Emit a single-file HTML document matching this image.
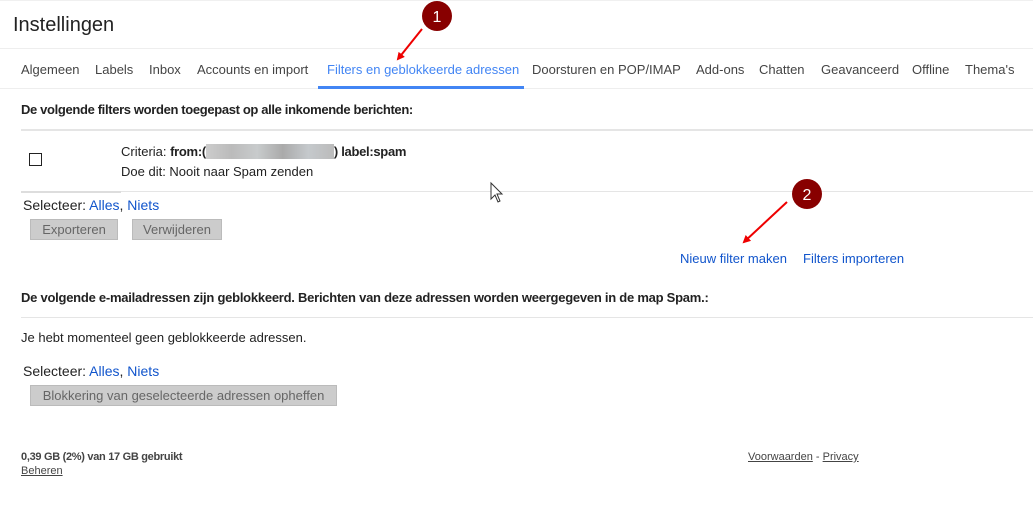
<!DOCTYPE html>
<html><head><meta charset="utf-8"><style>
body{margin:0;width:1033px;height:521px;background:#fff;position:relative;overflow:hidden;font-family:"Liberation Sans",Arial,sans-serif;color:#222;}
.a{position:absolute;white-space:nowrap;font-size:13px;line-height:16px;}
.t{color:#444;}
.b{font-weight:bold;letter-spacing:-0.35px;}
.l{color:#15c;}
.hr{position:absolute;height:1px;background:#e5e5e5;}
.btn{position:absolute;background:#ccc;border:1px solid #bbb;color:#666;font-size:13px;text-align:center;line-height:19px;box-sizing:border-box;height:21px;}
.u{text-decoration:underline;color:#444;font-size:11px;}
</style></head><body>
<div class="hr" style="left:0;top:0;width:1033px;background:#f0f0f0"></div>
<div class="a" style="left:13px;top:13px;font-size:20px;line-height:24px;color:#222">Instellingen</div>
<div class="hr" style="left:0;top:48px;width:1033px;background:#eee"></div>
<div class="a t" style="left:21px;top:62px">Algemeen</div>
<div class="a t" style="left:95px;top:62px">Labels</div>
<div class="a t" style="left:149px;top:62px">Inbox</div>
<div class="a t" style="left:197px;top:62px">Accounts en import</div>
<div class="a" style="left:327px;top:62px;color:#4285f4">Filters en geblokkeerde adressen</div>
<div class="a t" style="left:532px;top:62px">Doorsturen en POP/IMAP</div>
<div class="a t" style="left:696px;top:62px">Add-ons</div>
<div class="a t" style="left:759px;top:62px">Chatten</div>
<div class="a t" style="left:821px;top:62px">Geavanceerd</div>
<div class="a t" style="left:912px;top:62px">Offline</div>
<div class="a t" style="left:965px;top:62px">Thema's</div>
<div class="hr" style="left:0;top:88px;width:1033px;background:#eee"></div>
<div style="position:absolute;left:318px;top:86px;width:206px;height:3px;background:#4285f4"></div>

<div class="a b" style="left:21px;top:102px">De volgende filters worden toegepast op alle inkomende berichten:</div>
<div class="hr" style="left:21px;top:129px;width:1012px;height:2px"></div>
<div style="position:absolute;left:29px;top:153px;width:11px;height:11px;border:1px solid #222"></div>
<div class="a" style="left:121px;top:144px">Criteria: <b style="letter-spacing:-0.3px">from:(</b><span style="display:inline-block;width:128px;height:15px;vertical-align:-3px;background:linear-gradient(90deg,#ccc,#bbb 20%,#c8cbcc 40%,#aaa 60%,#c5c9cc 80%,#bbb)"></span><b style="letter-spacing:-0.3px">) label:spam</b></div>
<div class="a" style="left:121px;top:164px">Doe dit: Nooit naar Spam zenden</div>
<div class="hr" style="left:21px;top:191px;width:1012px"></div>
<div class="hr" style="left:21px;top:191px;width:100px;height:2px;background:#ddd"></div>
<div class="a" style="left:23px;top:197px;font-size:14px">Selecteer: <span class="l">Alles</span>, <span class="l">Niets</span></div>
<div class="btn" style="left:30px;top:219px;width:88px">Exporteren</div>
<div class="btn" style="left:132px;top:219px;width:90px">Verwijderen</div>
<div class="a l" style="left:680px;top:251px">Nieuw filter maken</div>
<div class="a l" style="left:803px;top:251px">Filters importeren</div>

<div class="a b" style="left:21px;top:290px;letter-spacing:-0.25px">De volgende e-mailadressen zijn geblokkeerd. Berichten van deze adressen worden weergegeven in de map Spam.:</div>
<div class="hr" style="left:21px;top:317px;width:1012px"></div>
<div class="a" style="left:21px;top:330px">Je hebt momenteel geen geblokkeerde adressen.</div>
<div class="a" style="left:23px;top:363px;font-size:14px">Selecteer: <span class="l">Alles</span>, <span class="l">Niets</span></div>
<div class="btn" style="left:30px;top:385px;width:307px">Blokkering van geselecteerde adressen opheffen</div>

<div class="a b" style="left:21px;top:449px;font-size:11px;color:#444;letter-spacing:-0.3px">0,39 GB (2%) van 17 GB gebruikt</div>
<div class="a u" style="left:21px;top:463px">Beheren</div>
<div class="a" style="left:748px;top:449px;font-size:11px;color:#444"><span class="u">Voorwaarden</span> - <span class="u">Privacy</span></div>

<svg style="position:absolute;left:0;top:0" width="1033" height="521">
<defs><marker id="m" markerWidth="8" markerHeight="8" refX="6" refY="4" orient="auto" markerUnits="userSpaceOnUse"><path d="M0,0 L8,4 L0,8 z" fill="#e00"/></marker></defs>
<line x1="422" y1="29" x2="398" y2="59" stroke="#e00" stroke-width="2" marker-end="url(#m)"/>
<circle cx="437" cy="16" r="15" fill="#800"/>
<text x="437" y="22" text-anchor="middle" fill="#fff" font-size="16" font-family="Liberation Sans">1</text>
<line x1="787" y1="202" x2="744" y2="242" stroke="#e00" stroke-width="2" marker-end="url(#m)"/>
<circle cx="807" cy="194" r="15" fill="#800"/>
<text x="807" y="200" text-anchor="middle" fill="#fff" font-size="16" font-family="Liberation Sans">2</text>
<path d="M491,183 L491,199 L495,195 L498,202 L500,201 L497,194 L502,194 Z" fill="#fff" stroke="#333" stroke-width="1"/>
</svg>
</body></html>
